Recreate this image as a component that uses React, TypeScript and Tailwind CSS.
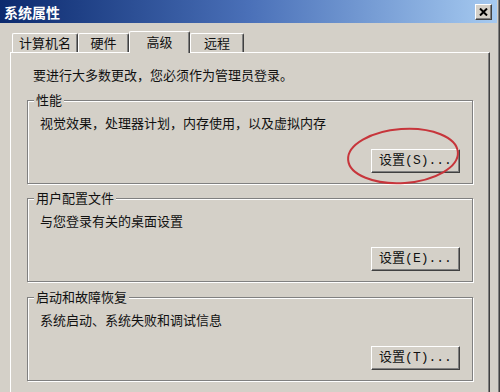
const FONT = "font-['Noto_Sans_CJK_SC','Noto_Sans',sans-serif]"
const BTN_FONT = "font-['Liberation_Mono','Noto_Sans_CJK_SC',monospace]"

const TABS = [
  { label: '计算机名', width: 'w-[66px]', active: false },
  { label: '硬件',     width: 'w-[51px]', active: false },
  { label: '高级',     width: 'w-[61px]', active: true  },
  { label: '远程',     width: 'w-[54px]', active: false },
]

const GROUPS = [
  { title: '性能',           desc: '视觉效果，处理器计划，内存使用，以及虚拟内存', button: '设置(S)...', gap: 'mt-[17px]' },
  { title: '用户配置文件',   desc: '与您登录有关的桌面设置',                       button: '设置(E)...', gap: 'mt-[14px]' },
  { title: '启动和故障恢复', desc: '系统启动、系统失败和调试信息',                 button: '设置(T)...', gap: 'mt-[15px]' },
]

function ClassicButton({ label }: { label: string }) {
  return (
    <button
      type="button"
      className={`ml-auto flex h-[24px] w-[89px] items-center justify-center border border-t-white border-l-white border-r-[#404040] border-b-[#404040] bg-[#d4d0c8] text-[13px] leading-[16px] text-[#111] shadow-[inset_-1px_-1px_0_#808080] ${BTN_FONT}`}
    >
      {label}
    </button>
  )
}

function GroupBox({ title, desc, button, gap }: { title: string; desc: string; button: string; gap: string }) {
  return (
    <div className={`${gap} border border-[#808080] px-[12px] pb-[10px] shadow-[inset_1px_1px_0_#fff,1px_1px_0_#fff]`}>
      <div className="-mt-[9px] -ml-[6px] w-fit bg-[#d4d0c8] px-[2px] text-[13px] leading-[16px] text-[#111]">
        {title}
      </div>
      <div className="mt-[7px] text-[13px] leading-[16px] text-[#111]">{desc}</div>
      <div className="mt-[18px] flex">
        <ClassicButton label={button} />
      </div>
    </div>
  )
}

export default function App() {
  return (
    <div className={`relative h-[392px] w-[500px] overflow-hidden bg-[#d4d0c8] shadow-[inset_-1px_0_0_#404040,inset_-2px_0_0_#808080] ${FONT}`}>
      {/* Title bar */}
      <div className="flex h-[23px] w-[497px] items-center bg-gradient-to-r from-[#0c2a6e] via-[#4a70b8] to-[#a6caf0] pl-[4px] pr-[5px]">
        <span className="text-[14px] font-bold leading-[16px] text-white">系统属性</span>
        <button
          type="button"
          className="ml-auto flex h-[16px] w-[17px] items-center justify-center border border-t-white border-l-white border-r-[#404040] border-b-[#404040] bg-[#d4d0c8] shadow-[inset_-1px_-1px_0_#808080]"
        >
          <svg width="9" height="8" viewBox="0 0 9 8">
            <path d="M1 0.5 L8 7.5 M8 0.5 L1 7.5" stroke="#000" strokeWidth="2" />
          </svg>
        </button>
      </div>

      <div className="pl-[10px] pr-[10px] pt-[8px]">
        {/* Tabs */}
        <div className="flex h-[21px] items-end pl-[2px]">
          {TABS.map(t => (
            <div
              key={t.label}
              className={`
                flex items-center justify-center rounded-t-[2px] border-t border-l border-r border-t-white border-l-white border-r-[#404040] bg-[#d4d0c8] text-[13px] leading-[16px] text-[#111] shadow-[inset_-1px_0_0_#808080]
                ${t.width}
                ${t.active ? 'relative z-10 -mb-px h-[22px] pb-[2px]' : 'h-[19px]'}
              `}
            >
              {t.label}
            </div>
          ))}
        </div>

        {/* Tab panel */}
        <div className="h-[360px] border-t border-l border-r border-t-white border-l-white border-r-[#404040] px-[16px] pt-[14px] shadow-[inset_-1px_0_0_#808080]">
          <div className="pl-[6px] text-[13px] leading-[16px] text-[#111]">
            要进行大多数更改，您必须作为管理员登录。
          </div>
          {GROUPS.map(g => (
            <GroupBox key={g.title} {...g} />
          ))}
        </div>
      </div>

      {/* Red annotation circle */}
      <svg className="pointer-events-none absolute left-[344px] top-[125px]" width="120" height="62" viewBox="0 0 120 62">
        <ellipse cx="59" cy="31" rx="55" ry="27" fill="none" stroke="#c7353b" strokeWidth="2" transform="rotate(-4 59 31)" />
      </svg>
    </div>
  )
}
